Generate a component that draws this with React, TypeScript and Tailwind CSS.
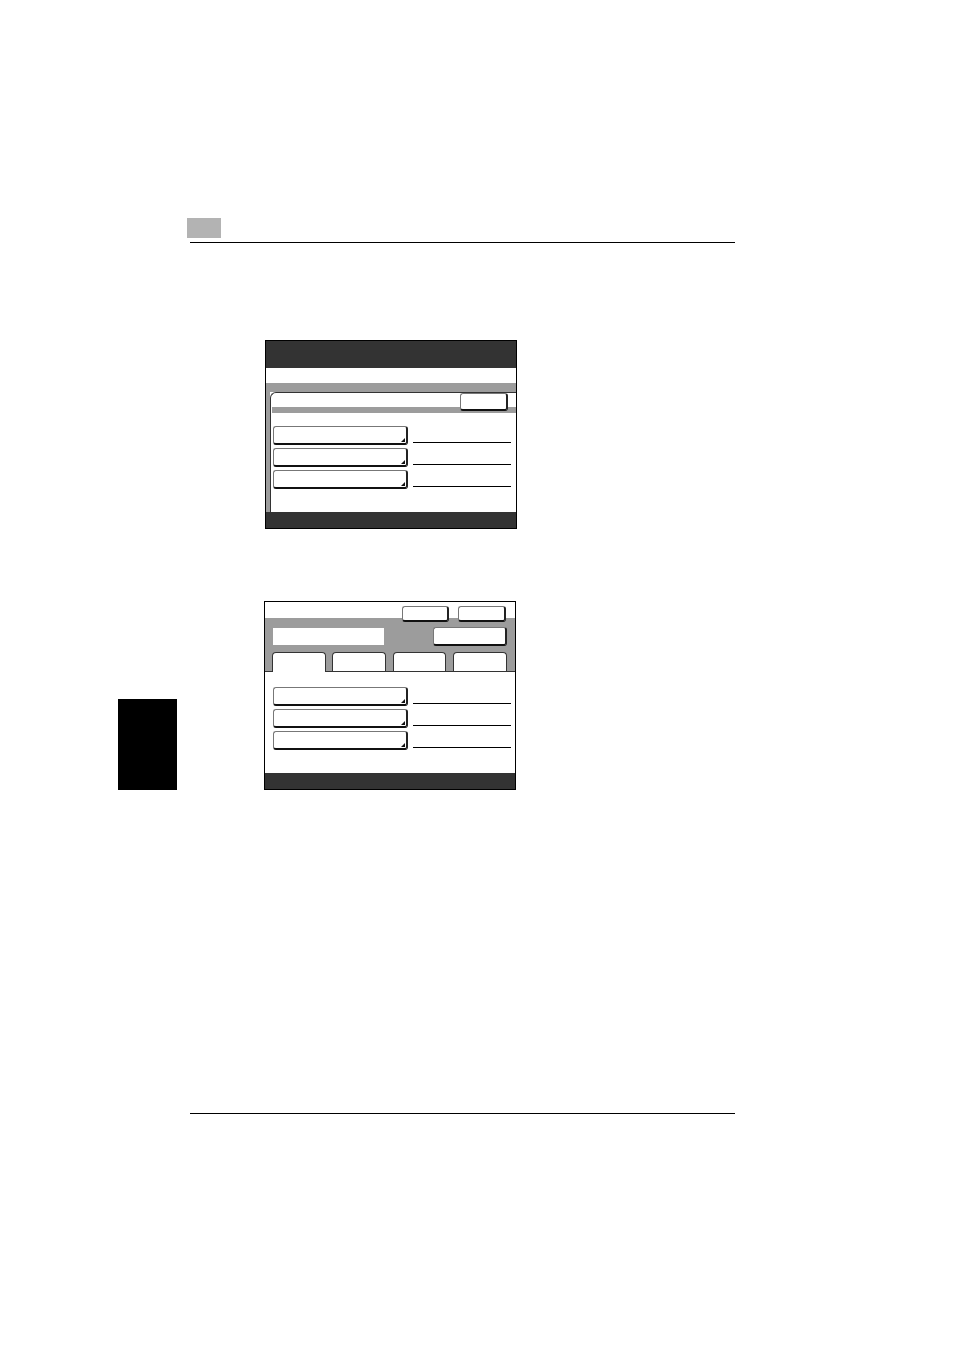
function Key({ w, h, arrow = false }: { w: string; h: string; arrow?: boolean }) {
  return (
    <div
      className={`relative z-10 shrink-0 rounded-[3px] border border-[#777] border-b-2 border-r-2 border-b-[#111] border-r-[#222] bg-white ${w} ${h}`}
    >
      {arrow && (
        <svg className="absolute bottom-[1px] right-[1px]" width="4" height="4" viewBox="0 0 4 4">
          <polygon points="4,0 4,4 0,4" fill="#111" />
        </svg>
      )}
    </div>
  );
}

function Rows() {
  return (
    <div className="flex flex-col gap-[3px]">
      {[0, 1, 2].map((i) => (
        <div key={i} className="flex items-end">
          <Key w="w-[135px]" h="h-[19px]" arrow />
          <div className="mb-[2px] ml-[5px] h-px w-[98px] bg-black" />
        </div>
      ))}
    </div>
  );
}

function ScreenOne() {
  return (
    <div className="ml-[265px] flex h-[189px] w-[252px] flex-col border border-black bg-white">
      <div className="h-[27px] bg-[#333]" />
      <div className="h-[15px] bg-white" />
      <div className="h-[9px] bg-[#9c9c9c]" />
      <div className="flex flex-1">
        <div className="w-[4px] bg-[#9c9c9c]" />
        <div className="flex flex-1 flex-col rounded-tl-[6px] border-l border-t border-[#333] bg-white">
          <div className="flex justify-end pr-[8px]">
            <Key w="w-[48px]" h="h-[18px]" />
          </div>
          <div className="-mt-[4px] ml-[1px] h-[6px] bg-[#9c9c9c]" />
          <div className="ml-[2px] mt-[13px]">
            <Rows />
          </div>
        </div>
      </div>
      <div className="h-[16px] bg-[#333]" />
    </div>
  );
}

function ScreenTwo() {
  return (
    <div className="ml-[87px] flex h-[189px] w-[252px] flex-col border border-black bg-white">
      <div className="flex h-[16px] justify-end gap-[9px] pr-[9px] pt-[4px]">
        <Key w="w-[47px]" h="h-[16px]" />
        <Key w="w-[48px]" h="h-[16px]" />
      </div>
      <div className="flex h-[53px] flex-col bg-[#9c9c9c]">
        <div className="flex items-start justify-between pl-[8px] pr-[8px] pt-[9px]">
          <div className="mt-[1px] h-[17px] w-[111px] bg-white" />
          <Key w="w-[74px]" h="h-[19px]" />
        </div>
        <div className="mt-auto flex items-end gap-[6px] pl-[7px]">
          <div className="relative z-10 -mb-px h-[20px] w-[54px] rounded-t-[4px] border border-b-0 border-[#333] bg-white" />
          <div className="h-[19px] w-[54px] rounded-t-[4px] border border-b-0 border-[#333] bg-white" />
          <div className="ml-px h-[19px] w-[53px] rounded-t-[4px] border border-b-0 border-[#333] bg-white" />
          <div className="ml-px h-[19px] w-[54px] rounded-t-[4px] border border-b-0 border-[#333] bg-white" />
        </div>
      </div>
      <div className="flex flex-1 flex-col border-t border-[#333] bg-white pl-[8px] pt-[15px]">
        <Rows />
      </div>
      <div className="h-[16px] bg-[#333]" />
    </div>
  );
}

export default function App() {
  return (
    <div className="flex h-[1350px] w-[954px] flex-col bg-white pt-[218px]" style={{ fontFamily: '"Liberation Sans", Arial, sans-serif' }}>
      <div className="ml-[187px] h-[20px] w-[34px] bg-[#b3b3b3]" />
      <div className="ml-[190px] mt-[4px] h-px w-[545px] bg-black" />
      <div className="mt-[97px]">
        <ScreenOne />
      </div>
      <div className="mt-[72px] flex items-end">
        <div className="ml-[118px] h-[91px] w-[59px] bg-black" />
        <ScreenTwo />
      </div>
      <div className="ml-[190px] mt-[323px] h-px w-[545px] bg-black" />
    </div>
  );
}
